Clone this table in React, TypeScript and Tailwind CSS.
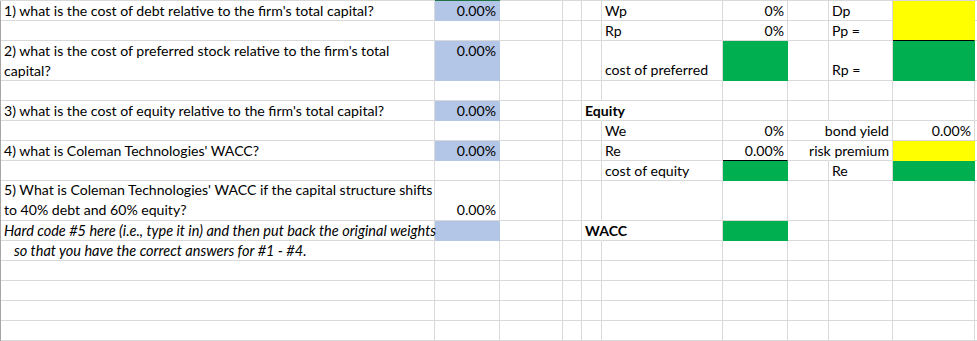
import React from 'react';

type Cell = {
  t?: React.ReactNode;
  align?: 'l' | 'r';
  v?: 't' | 'm' | 'b';
  bold?: boolean;
  italic?: boolean;
  fill?: string;
  noRight?: boolean;
  blackBottom?: boolean;
  front?: boolean;
  indent?: boolean;
};

const BLUE = 'bg-[#b4c6e7]';
const GREEN = 'bg-[#00b050]';
const YELLOW = 'bg-[#ffff00]';

// column widths A..K
const COLS = 'grid-cols-[434px_65px_63px_19px_20px_121px_65px_41px_64px_82px_2px]';
const ROWS =
  'grid-rows-[20px_20px_40px_20px_20px_20px_20px_20px_40px_20px_20px_20px_20px_20px_20px]';

const sheet: Record<string, Cell> = {
  // row 1
  '1-0': { t: "1) what is the cost of debt relative to the firm's total capital?" },
  '1-1': { t: '0.00%', align: 'r', fill: BLUE },
  '1-5': { t: 'Wp' },
  '1-6': { t: '0%', align: 'r' },
  '1-8': { t: 'Dp' },
  '1-9': { fill: YELLOW },
  // row 2
  '2-5': { t: 'Rp' },
  '2-6': { t: '0%', align: 'r' },
  '2-8': { t: 'Pp =' },
  '2-9': { fill: YELLOW, blackBottom: true },
  // row 3
  '3-0': {
    t: (
      <>
        2) what is the cost of preferred stock relative to the firm's total
        <br />
        capital?
      </>
    ),
    v: 't',
  },
  '3-1': { t: '0.00%', align: 'r', fill: BLUE, v: 't' },
  '3-5': { t: 'cost of preferred', v: 'b' },
  '3-6': { fill: GREEN },
  '3-8': { t: 'Rp =', v: 'b' },
  '3-9': { fill: GREEN },
  // row 5
  '5-0': { t: "3) what is the cost of equity relative to the firm's total capital?" },
  '5-1': { t: '0.00%', align: 'r', fill: BLUE },
  '5-4': { t: 'Equity', bold: true, noRight: true },
  // row 6
  '6-5': { t: 'We' },
  '6-6': { t: '0%', align: 'r' },
  '6-7': { noRight: true },
  '6-8': { t: 'bond yield', align: 'r' },
  '6-9': { t: '0.00%', align: 'r' },
  // row 7
  '7-0': { t: "4) what is Coleman Technologies' WACC?" },
  '7-1': { t: '0.00%', align: 'r', fill: BLUE },
  '7-5': { t: 'Re' },
  '7-6': { t: '0.00%', align: 'r', blackBottom: true },
  '7-7': { noRight: true },
  '7-8': { t: 'risk premium', align: 'r' },
  '7-9': { fill: YELLOW },
  // row 8
  '8-5': { t: 'cost of equity' },
  '8-6': { fill: GREEN },
  '8-8': { t: 'Re' },
  '8-9': { fill: GREEN },
  // row 9
  '9-0': {
    t: (
      <>
        5) What is Coleman Technologies' WACC if the capital structure shifts
        <br />
        to 40% debt and 60% equity?
      </>
    ),
    v: 'b',
  },
  '9-1': { t: '0.00%', align: 'r', v: 'b' },
  // row 10
  '10-0': {
    t: 'Hard code #5 here (i.e., type it in) and then put back the original weights',
    italic: true,
    front: true,
  },
  '10-1': { fill: BLUE },
  '10-4': { t: 'WACC', bold: true, noRight: true },
  '10-6': { fill: GREEN },
  // row 11
  '11-0': { t: 'so that you have the correct answers for #1 - #4.', italic: true, indent: true },
};

const SheetCell: React.FC<{ cell?: Cell }> = ({ cell = {} }) => {
  const fill = cell.fill ?? '';
  const right = cell.noRight || cell.fill ? 'border-r-transparent' : 'border-r-[#d9d9d9]';
  const bottom = cell.blackBottom
    ? 'border-b-black'
    : cell.fill
      ? 'border-b-transparent'
      : 'border-b-[#d9d9d9]';
  const vAlign = cell.v === 't' ? 'items-start' : cell.v === 'b' ? 'items-end' : 'items-center';

  return (
    <div
      className={`flex ${vAlign} ${cell.align === 'r' ? 'justify-end pr-[3px]' : 'justify-start pl-[3px]'} ${fill} border-r border-b ${right} ${bottom} min-w-0 ${cell.front ? 'relative z-10' : ''}`}
    >
      {cell.t && (
        <span
          className={`shrink-0 whitespace-nowrap leading-[20px] ${cell.bold ? 'font-bold' : ''} ${cell.italic ? 'italic text-[14.5px]' : ''} ${cell.indent ? 'pl-[10px]' : ''}`}
        >
          {cell.t}
        </span>
      )}
    </div>
  );
};

export default function App() {
  const rows = Array.from({ length: 15 }, (_, i) => i + 1);
  const cols = Array.from({ length: 11 }, (_, i) => i);

  return (
    <div
      className="w-[977px] h-[341px] bg-white text-black overflow-hidden text-[14.1px]"
      style={{ fontFamily: 'Lato, "Open Sans", sans-serif' }}
    >
      {/* gridline of the row above, with the selected-cell edge over column B */}
      <div className="flex h-px">
        <div className="w-[435px] bg-[#d9d9d9]" />
        <div className="w-[65px] bg-[#217346]" />
        <div className="flex-1 bg-[#d9d9d9]" />
      </div>
      <div className={`grid ${COLS} ${ROWS} border-l border-l-[#a6a6a6]`}>
        {rows.map((r) =>
          cols.map((c) => <SheetCell key={`${r}-${c}`} cell={sheet[`${r}-${c}`]} />),
        )}
      </div>
    </div>
  );
}
